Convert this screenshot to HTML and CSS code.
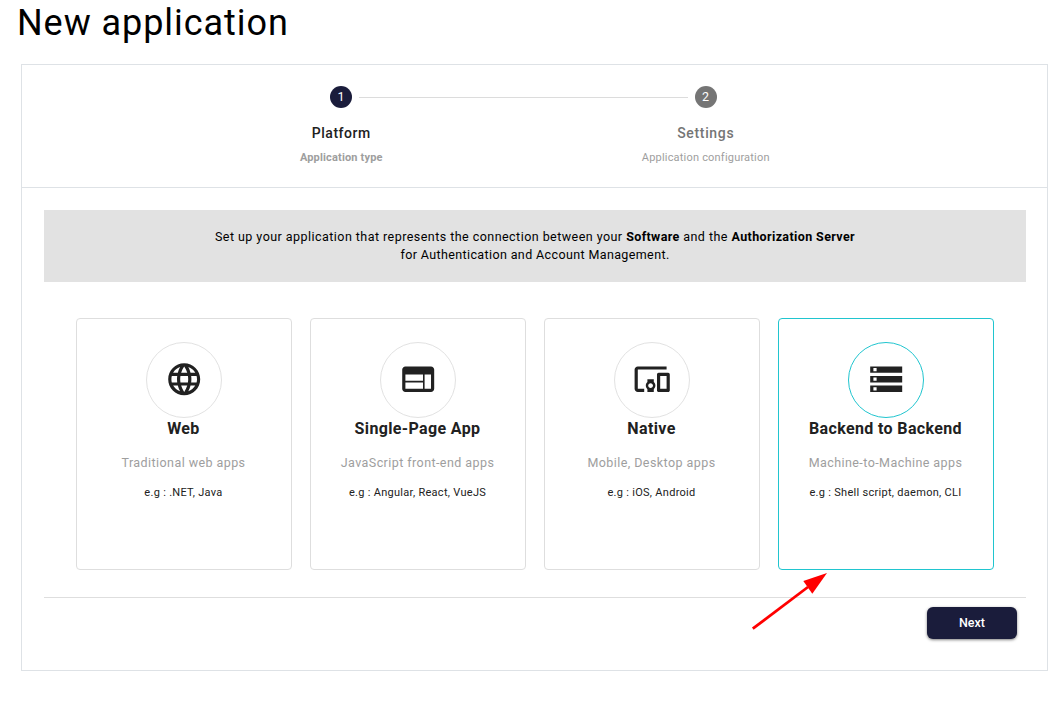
FILE: index.html
```html
<!DOCTYPE html>
<html lang="en">
<head>
<meta charset="utf-8">
<title>New application</title>
<link rel="stylesheet" href="styles.css">
</head>
<body>
<h1 class="page-title">New application</h1>
<main class="wizard">
  <header class="stepper">
    <div class="track">
      <span class="dot dot-active">1</span>
      <span class="line"></span>
      <span class="dot">2</span>
    </div>
    <div class="steps">
      <div class="step step-active">
        <div class="step-name">Platform</div>
        <div class="step-note">Application type</div>
      </div>
      <div class="step">
        <div class="step-name step-name-wide">Settings</div>
        <div class="step-note">Application configuration</div>
      </div>
    </div>
  </header>
  <section class="content">
    <p class="info">Set up your application that represents the connection between your <b>Software</b> and the <b>Authorization Server</b><br><span class="info-second">for Authentication and Account Management.</span></p>
    <div class="cards">
      <article class="card">
        <div class="badge"><svg class="icon" viewBox="0 0 24 24"><path d="M11.99 2C6.47 2 2 6.48 2 12s4.47 10 9.99 10C17.52 22 22 17.52 22 12S17.52 2 11.99 2zm6.93 6h-2.95c-.32-1.25-.78-2.45-1.38-3.56 1.84.63 3.37 1.91 4.33 3.56zM12 4.04c.83 1.2 1.48 2.53 1.91 3.96h-3.82c.43-1.43 1.08-2.76 1.91-3.96zM4.26 14C4.1 13.36 4 12.69 4 12s.1-1.36.26-2h3.38c-.08.66-.14 1.32-.14 2s.06 1.34.14 2H4.26zm.82 2h2.95c.32 1.25.78 2.45 1.38 3.56-1.84-.63-3.37-1.9-4.33-3.56zm2.95-8H5.08c.96-1.66 2.49-2.93 4.33-3.56C8.81 5.55 8.35 6.75 8.03 8zM12 19.96c-.83-1.2-1.48-2.53-1.91-3.96h3.82c-.43 1.43-1.08 2.76-1.91 3.96zM14.34 14H9.66c-.09-.66-.16-1.32-.16-2s.07-1.35.16-2h4.68c.09.65.16 1.32.16 2s-.07 1.34-.16 2zm.25 5.56c.6-1.11 1.06-2.31 1.38-3.56h2.95c-.96 1.65-2.49 2.93-4.33 3.56zM16.36 14c.08-.66.14-1.32.14-2s-.06-1.34-.14-2h3.38c.16.64.26 1.31.26 2s-.1 1.36-.26 2h-3.38z"/></svg></div>
        <h2 class="card-title">Web</h2>
        <p class="card-kind">Traditional web apps</p>
        <p class="card-example">e.g : .NET, Java</p>
      </article>
      <article class="card">
        <div class="badge"><svg class="icon" viewBox="0 0 24 24"><path d="M20 4H4c-1.1 0-1.99.9-1.99 2L2 18c0 1.1.9 2 2 2h16c1.1 0 2-.9 2-2V6c0-1.1-.9-2-2-2zm-5 14H4v-4h11v4zm0-5H4V9h11v4zm5 5h-4V9h4v9z"/></svg></div>
        <h2 class="card-title">Single-Page App</h2>
        <p class="card-kind">JavaScript front-end apps</p>
        <p class="card-example">e.g : Angular, React, VueJS</p>
      </article>
      <article class="card">
        <div class="badge"><svg class="icon" viewBox="0 0 24 24"><path d="M3 6h18V4H3c-1.1 0-2 .9-2 2v12c0 1.1.9 2 2 2h4v-2H3V6zm10 6H9v1.78c-.61.55-1 1.33-1 2.22s.39 1.67 1 2.22V20h4v-1.78c.61-.55 1-1.34 1-2.22s-.39-1.67-1-2.22V12zm-2 5.5c-.83 0-1.5-.67-1.5-1.5s.67-1.5 1.5-1.5 1.5.67 1.5 1.5-.67 1.5-1.5 1.5zM22 8h-6c-.5 0-1 .5-1 1v10c0 .5.5 1 1 1h6c.5 0 1-.5 1-1V9c0-.5-.5-1-1-1zm-1 10h-4v-8h4v8z"/></svg></div>
        <h2 class="card-title">Native</h2>
        <p class="card-kind">Mobile, Desktop apps</p>
        <p class="card-example">e.g : iOS, Android</p>
      </article>
      <article class="card card-selected">
        <div class="badge"><svg class="icon" viewBox="0 0 24 24"><path d="M2 20h20v-4H2v4zm2-3h2v2H4v-2zM2 4v4h20V4H2zm4 3H4V5h2v2zm-4 7h20v-4H2v4zm2-3h2v2H4v-2z"/></svg></div>
        <h2 class="card-title">Backend to Backend</h2>
        <p class="card-kind">Machine-to-Machine apps</p>
        <p class="card-example">e.g : Shell script, daemon, CLI</p>
      </article>
    </div>
    <footer class="actions"><button class="next" type="button">Next</button></footer>
  </section>
</main>
<svg class="pointer" viewBox="0 0 80 62"><path class="pointer-shaft" d="M2.8 58.7 58 17"/><path class="pointer-head" d="M77 3 53.3 11l9 12.7z"/></svg>
</body>
</html>
```

FILE: styles.css
```css
* { box-sizing: border-box; }
body { margin: 0; background: #fff; color: #212121; font-family: Roboto, sans-serif; }
h1, h2, p { margin: 0; }

.page-title { padding: 2px 0 0 17px; color: #000; font-size: 36px; font-weight: 400; line-height: 42px; letter-spacing: .94px; }

.wizard { width: 1027px; height: 607px; margin: 20px 0 0 21px; border: 1px solid #dee2e6; }

.stepper { height: 123px; padding-top: 21px; border-bottom: 1px solid #dee2e6; }
.track { display: flex; align-items: center; gap: 7px; width: 386.5px; margin-left: 308px; }
.dot { width: 22px; height: 22px; border-radius: 50%; background: #757575; color: #fff; font-size: 12.5px; line-height: 22px; text-align: center; }
.dot-active { background: #1a1c3b; }
.line { flex: 1; height: 1px; background: #dcdcdc; }
.steps { display: grid; grid-template-columns: 364.5px 364.5px; margin: 17px 0 0 137px; text-align: center; }
.step { color: #757575; }
.step-name { font-size: 14px; font-weight: 500; line-height: 16px; letter-spacing: .54px; }
.step-name-wide { letter-spacing: .67px; }
.step-note { margin-top: 10px; color: #9e9e9e; font-size: 11px; line-height: 13px; letter-spacing: .2px; }
.step-active { color: #212121; }
.step-active .step-note { font-weight: 700; letter-spacing: .16px; }

.content { padding: 22px 21px 0 22px; }
.info { height: 72px; padding-top: 18px; background: #e2e2e2; color: #000; font-size: 12.5px; line-height: 18px; letter-spacing: .455px; text-align: center; }
.info b { letter-spacing: .38px; }
.info-second { letter-spacing: .38px; }

.cards { display: grid; grid-template-columns: repeat(4, 216px); gap: 18px; margin: 36px 0 27px 32px; }
.card { display: flex; flex-direction: column; align-items: center; height: 252px; padding: 23px 1px 0 0; border: 1px solid #dedede; border-radius: 4px; }
.badge { width: 76px; height: 76px; margin-left: 1px; padding: 17px 0 0 17.5px; border: 1px solid #e2e2e2; border-radius: 50%; }
.icon { display: block; width: 38.4px; height: 38.4px; fill: #212121; }
.card-selected, .card-selected .badge { border-color: #20c5cf; }
.card-title { margin-top: 1px; font-size: 16px; font-weight: 700; line-height: 20px; letter-spacing: .36px; }
.card-kind { margin-top: 16px; color: #9e9e9e; font-size: 12.5px; line-height: 16px; letter-spacing: .43px; }
.card-example { margin-top: 15px; font-size: 11px; line-height: 14px; letter-spacing: .29px; }

.actions { display: flex; justify-content: flex-end; padding: 9px 9px 0 0; border-top: 1px solid #dedede; }
.next { width: 90px; height: 32px; padding: 0; border: 0; border-radius: 6px; background: #1a1c3b; color: #fff; font: 500 12.5px/32px Roboto, sans-serif; box-shadow: 0 1px 3px rgba(0, 0, 0, .5); }

/* Annotation arrow laid over the form */
.pointer { position: absolute; left: 750px; top: 570px; width: 80px; height: 62px; }
.pointer-shaft { fill: none; stroke: #f00; stroke-width: 2.8; }
.pointer-head { fill: #f00; }
```
